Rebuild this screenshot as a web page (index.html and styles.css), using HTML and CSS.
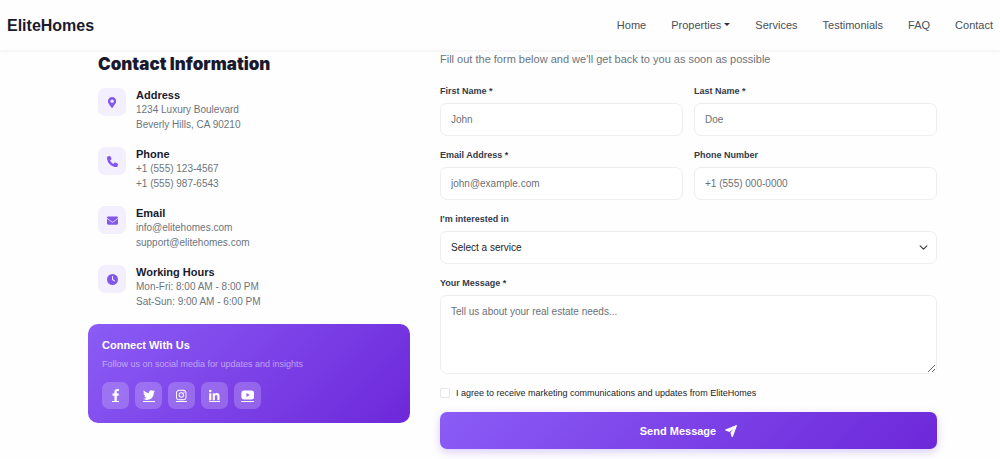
FILE: index.html
```html
<!DOCTYPE html>
<html lang="en">
<head>
  <meta charset="UTF-8" />
  <meta name="viewport" content="width=device-width, initial-scale=1" />
  <title>EliteHomes - Contact</title>
  <link rel="stylesheet" href="styles.css">
</head>
<body>
  <header class="navbar">
    <a class="brand" href="#">EliteHomes</a>
    <nav class="nav-links">
      <a href="#">Home</a>
      <a href="#" class="dropdown">Properties</a>
      <a href="#">Services</a>
      <a href="#">Testimonials</a>
      <a href="#">FAQ</a>
      <a href="#">Contact</a>
    </nav>
  </header>

  <main class="contact">
    <!-- Contact details -->
    <section class="contact-info">
      <h2>Contact Information</h2>

      <div class="info-item">
        <div class="info-icon">
          <svg viewBox="0 0 384 512"><path fill-rule="evenodd" d="M172 502C27 291 0 269 0 192a192 192 0 0 1 384 0c0 77-27 99-172 310a24 24 0 0 1-40 0zM192 272a80 80 0 1 0 0-160 80 80 0 0 0 0 160z"/></svg>
        </div>
        <div>
          <h3>Address</h3>
          <p>1234 Luxury Boulevard<br>Beverly Hills, CA 90210</p>
        </div>
      </div>

      <div class="info-item">
        <div class="info-icon">
          <svg viewBox="0 0 512 512"><path d="M165 25c-8-19-29-29-48-23L29 26C12 31 0 46 0 64c0 247 201 448 448 448 18 0 33-12 38-29l24-88c6-19-4-40-23-48l-96-40c-16-7-35-2-47 12l-40 49c-70-33-127-90-160-160l49-40c14-12 19-31 12-47z"/></svg>
        </div>
        <div>
          <h3>Phone</h3>
          <p>+1 (555) 123-4567<br>+1 (555) 987-6543</p>
        </div>
      </div>

      <div class="info-item">
        <div class="info-icon">
          <svg viewBox="0 0 512 512"><path d="M48 64a48 48 0 0 0-29 86l218 164c11 8 27 8 38 0l218-164a48 48 0 0 0-29-86zM0 176v208c0 35 29 64 64 64h384c35 0 64-29 64-64V176L294 340c-23 17-53 17-76 0z"/></svg>
        </div>
        <div>
          <h3>Email</h3>
          <p>info@elitehomes.com<br>support@elitehomes.com</p>
        </div>
      </div>

      <div class="info-item">
        <div class="info-icon">
          <svg viewBox="0 0 512 512"><path fill-rule="evenodd" d="M256 0a256 256 0 1 1 0 512 256 256 0 0 1 0-512zM232 120v136c0 8 4 15 11 20l96 64c11 7 26 4 33-7 8-11 5-26-6-33l-86-57V120c0-13-11-24-24-24s-24 11-24 24z"/></svg>
        </div>
        <div>
          <h3>Working Hours</h3>
          <p>Mon-Fri: 8:00 AM - 8:00 PM<br>Sat-Sun: 9:00 AM - 6:00 PM</p>
        </div>
      </div>

      <div class="social-card">
        <h3>Connect With Us</h3>
        <p>Follow us on social media for updates and insights</p>
        <div class="social-links">
          <a href="#" aria-label="Facebook">
            <svg viewBox="0 0 320 512"><path d="M279 288l14-93h-89v-60c0-25 12-50 52-50h41V7s-37-7-72-7C152 0 104 44 104 125v70H23v93h81v224h100V288z"/></svg>
          </a>
          <a href="#" aria-label="Twitter">
            <svg viewBox="0 0 512 512"><path d="M459 152c1 4 1 9 1 14 0 138-106 298-299 298-59 0-115-17-161-47 8 1 16 1 25 1 49 0 94-16 130-45-46-1-85-31-98-73 7 1 13 2 20 2 9 0 19-1 28-4-48-9-84-51-84-102v-2c14 8 30 13 47 14-28-19-46-51-46-88 0-19 5-37 14-53 52 64 129 105 216 110-2-8-3-16-3-24 0-58 47-105 105-105 30 0 58 13 77 33 24-5 46-13 66-25-8 24-24 45-46 58 21-2 42-8 61-16-15 21-33 39-53 54z"/></svg>
          </a>
          <a href="#" aria-label="Instagram">
            <svg viewBox="0 0 448 512"><path fill-rule="evenodd" d="M132 32h184c73 0 132 59 132 132v184c0 73-59 132-132 132H132C59 480 0 421 0 348V164C0 91 59 32 132 32zm0 40c-51 0-92 41-92 92v184c0 51 41 92 92 92h184c51 0 92-41 92-92V164c0-51-41-92-92-92zm92 69a115 115 0 1 1 0 230 115 115 0 0 1 0-230zm0 40a75 75 0 1 0 0 150 75 75 0 0 0 0-150zM344 109a27 27 0 1 1 0 54 27 27 0 0 1 0-54z"/></svg>
          </a>
          <a href="#" aria-label="LinkedIn">
            <svg viewBox="0 0 448 512"><path d="M100 480H7V181h93zM54 140a54 54 0 1 1 0-108 54 54 0 0 1 0 108zM448 480h-93V334c0-34-1-79-48-79-49 0-56 38-56 77v148h-93V181h89v41h1c13-24 43-48 88-48 94 0 112 62 112 142z"/></svg>
          </a>
          <a href="#" aria-label="YouTube">
            <svg viewBox="0 0 576 512"><path fill-rule="evenodd" d="M550 124c-6-24-25-42-49-49-42-11-213-11-213-11S117 64 75 75c-24 7-43 25-49 49-11 43-11 132-11 132s0 90 11 133c6 24 25 41 49 48 42 11 213 11 213 11s171 0 213-11c24-7 43-24 49-48 11-43 11-133 11-133s0-89-11-132zM232 338V175l143 81z"/></svg>
          </a>
        </div>
      </div>
    </section>

    <!-- Contact form -->
    <section class="contact-form">
      <p class="form-intro">Fill out the form below and we'll get back to you as soon as possible</p>
      <form id="contactForm">
        <div class="form-row">
          <div class="field">
            <label for="firstName">First Name *</label>
            <input type="text" id="firstName" placeholder="John" required />
          </div>
          <div class="field">
            <label for="lastName">Last Name *</label>
            <input type="text" id="lastName" placeholder="Doe" required />
          </div>
          <div class="field">
            <label for="email">Email Address *</label>
            <input type="email" id="email" placeholder="john@example.com" required />
          </div>
          <div class="field">
            <label for="phone">Phone Number</label>
            <input type="tel" id="phone" placeholder="+1 (555) 000-0000" />
          </div>
        </div>

        <div class="field">
          <label for="service">I'm interested in</label>
          <div class="select-wrap">
            <select id="service">
              <option>Select a service</option>
            </select>
            <svg class="chevron" viewBox="0 0 16 16"><path d="M2 5l6 6 6-6"/></svg>
          </div>
        </div>

        <div class="field">
          <label for="message">Your Message *</label>
          <textarea id="message" placeholder="Tell us about your real estate needs..." required></textarea>
        </div>

        <div class="check">
          <input type="checkbox" id="agree" />
          <label for="agree">I agree to receive marketing communications and updates from EliteHomes</label>
        </div>

        <button type="submit" class="send-btn">
          Send Message
          <svg viewBox="0 0 24 24"><path d="M23 0q1 0 1 1L16 23q-1 2-3 0l-2-8 6-7-8 6-8-3q-2-1 0-2z"/></svg>
        </button>
      </form>
    </section>
  </main>
</body>
</html>
```
FILE: styles.css
```css
* {
  box-sizing: border-box;
}
body {
  font-family: "Liberation Sans", Arial, sans-serif;
  font-size: 10px;
  line-height: 15px;
  background-color: #fefefe;
  color: #212529;
  margin: 0;
}
h2, h3, p {
  margin: 0;
}

/* Navbar */
.navbar {
  display: flex;
  align-items: center;
  justify-content: space-between;
  height: 50px;
  padding: 0 7px;
  background-color: #fefefe;
  box-shadow: 0 1px 4px rgba(0,0,0,0.06);
}
.brand {
  font-size: 16px;
  font-weight: bold;
  color: #1a1a2e;
  text-decoration: none;
}
.nav-links {
  display: flex;
  gap: 25px;
}
.nav-links a {
  font-size: 11px;
  color: #4a4f57;
  text-decoration: none;
}
.dropdown::after {
  content: "";
  display: inline-block;
  margin-left: 3px;
  vertical-align: 3px;
  border-top: 3px solid #333;
  border-left: 3px solid transparent;
  border-right: 3px solid transparent;
}

/* Layout */
.contact {
  display: grid;
  grid-template-columns: 322fr 497fr;
  gap: 30px;
  padding: 2px 63px 10px 88px;
}

/* Contact info */
.contact-info h2 {
  font-family: Inter, "Liberation Sans", sans-serif;
  font-size: 17px;
  font-weight: 900;
  line-height: 24px;
  color: #1a1a2e;
  margin: 0 10px 12px;
}
.info-item {
  display: flex;
  gap: 10px;
  margin: 0 10px 15px;
}
.info-icon {
  display: flex;
  align-items: center;
  justify-content: center;
  width: 28px;
  height: 28px;
  border-radius: 7px;
  background-color: #f3effe;
}
.info-icon svg {
  height: 11px;
  fill: #8257ee;
}
.info-item h3 {
  font-size: 11px;
  line-height: 14px;
  color: #1a1a2e;
}
.info-item p {
  color: #6c757d;
}
.social-card {
  padding: 14px;
  border-radius: 10px;
  background: linear-gradient(135deg, #8b5cf6, #6d28d9);
  color: white;
}
.social-card h3 {
  font-size: 11px;
  line-height: 15px;
  margin-bottom: 4px;
}
.social-card p {
  font-size: 9px;
  color: rgba(255,255,255,0.5);
  margin-bottom: 10px;
}
.social-links {
  display: flex;
  gap: 6px;
}
.social-links a {
  display: flex;
  align-items: center;
  justify-content: center;
  width: 27px;
  height: 27px;
  border-radius: 7px;
  background-color: rgba(255,255,255,0.2);
}
.social-links svg {
  height: 13px;
  border-bottom: 1px solid white;
  fill: white;
}

/* Contact form */
.form-intro {
  font-size: 11px;
  color: #6c757d;
  margin-bottom: 17px;
}
.form-row {
  display: grid;
  grid-template-columns: 1fr 1fr;
  column-gap: 11px;
}
.field {
  margin-bottom: 12px;
}
.field label {
  display: block;
  font-size: 9px;
  font-weight: bold;
  line-height: 14px;
  color: #343a4a;
  margin-bottom: 5px;
}
.field input,
.field select,
.field textarea {
  display: block;
  width: 100%;
  height: 33px;
  padding: 0 10px;
  border: 1px solid #eeeef1;
  border-radius: 7px;
  background-color: #fff;
  color: #212529;
  font-family: inherit;
  font-size: 10px;
}
.field textarea {
  height: 79px;
  padding: 8px 10px;
  line-height: 15px;
  resize: vertical;
}
.field ::placeholder {
  color: #6c7075;
}
.field select {
  appearance: none;
}
.select-wrap {
  position: relative;
}
.chevron {
  position: absolute;
  top: 12px;
  right: 9px;
  width: 9px;
  height: 9px;
  fill: none;
  stroke: #343a40;
  stroke-width: 2;
  stroke-linecap: round;
  stroke-linejoin: round;
  pointer-events: none;
}
.check {
  display: flex;
  align-items: center;
  gap: 6px;
  font-size: 9px;
  line-height: 14px;
  margin-bottom: 12px;
}
.check input {
  appearance: none;
  width: 10px;
  height: 10px;
  margin: 0;
  border: 1px solid #e6e6ea;
  border-radius: 2px;
  background-color: #fff;
}
.send-btn {
  display: flex;
  align-items: center;
  justify-content: center;
  gap: 9px;
  width: 100%;
  height: 37px;
  border: none;
  border-radius: 7px;
  background: linear-gradient(135deg, #8b5cf6, #6d28d9);
  box-shadow: 0 3px 9px rgba(139,92,246,0.3);
  color: white;
  font-family: inherit;
  font-size: 11px;
  font-weight: bold;
  cursor: pointer;
}
.send-btn svg {
  width: 12px;
  height: 12px;
  fill: white;
}
```
